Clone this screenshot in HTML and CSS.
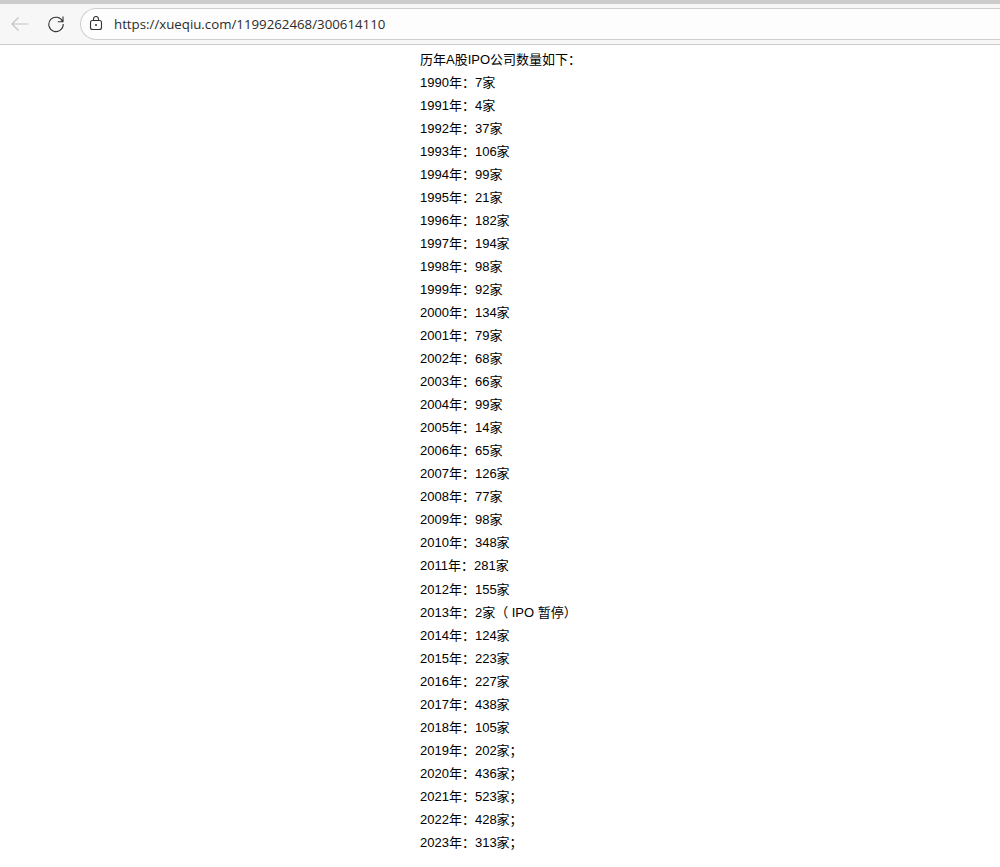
FILE: index.html
```html
<!DOCTYPE html>
<html lang="zh-CN">
<head>
<meta charset="utf-8">
<title>xueqiu</title>
<link rel="stylesheet" href="styles.css">
</head>
<body>
<header class="chrome">
  <div class="tabstrip"></div>
  <div class="toolbar">
    <svg class="icon back" width="20" height="16" viewBox="0 0 20 16"><path d="M18.500 8H2M8.500 1.500 2 8l6.500 6.500" fill="none" stroke="#c4c4c4" stroke-width="1.200"/></svg>
    <svg class="icon reload" width="18" height="18" viewBox="0 0 18 18"><path d="M15.600 6.500A7.200 7.200 0 1 0 16.200 9M16 1.500v5.200h-5.200" fill="none" stroke="#333" stroke-width="1.100"/></svg>
    <div class="omnibox">
      <svg class="lock" width="14" height="16" viewBox="0 0 14 16"><rect x="1.500" y="4.500" width="11" height="9" rx="2" fill="none" stroke="#333" stroke-width="1.100"/><path d="M4.500 4.500V3a2.500 2.500 0 0 1 5 0v1.500" fill="none" stroke="#333" stroke-width="1.100"/><circle cx="7" cy="9" r="1" fill="#333"/></svg>
      <span class="url">https://xueqiu.com/1199262468/300614110</span>
    </div>
  </div>
</header>
<main class="article">
  <p>历年A股IPO公司数量如下：</p>
  <p>1990年：7家</p>
  <p>1991年：4家</p>
  <p>1992年：37家</p>
  <p>1993年：106家</p>
  <p>1994年：99家</p>
  <p>1995年：21家</p>
  <p>1996年：182家</p>
  <p>1997年：194家</p>
  <p>1998年：98家</p>
  <p>1999年：92家</p>
  <p>2000年：134家</p>
  <p>2001年：79家</p>
  <p>2002年：68家</p>
  <p>2003年：66家</p>
  <p>2004年：99家</p>
  <p>2005年：14家</p>
  <p>2006年：65家</p>
  <p>2007年：126家</p>
  <p>2008年：77家</p>
  <p>2009年：98家</p>
  <p>2010年：348家</p>
  <p>2011年：281家</p>
  <p>2012年：155家</p>
  <p>2013年：2家（ IPO 暂停）</p>
  <p>2014年：124家</p>
  <p>2015年：223家</p>
  <p>2016年：227家</p>
  <p>2017年：438家</p>
  <p>2018年：105家</p>
  <p>2019年：202家；</p>
  <p>2020年：436家；</p>
  <p>2021年：523家；</p>
  <p>2022年：428家；</p>
  <p>2023年：313家；</p>
</main>
</body>
</html>
```
FILE: styles.css
```css
* { box-sizing: border-box; }
html, body { margin: 0; padding: 0; background: #fff; height: 867px; overflow: hidden; }
body { font-family: "Liberation Sans", "Noto Sans CJK SC", sans-serif; color: #000; }
.chrome { height: 45px; }
.tabstrip { height: 4px; background: #cccccc; }
.toolbar {
  height: 41px;
  background: #f7f7f7;
  border-bottom: 1px solid #cccccc;
  display: flex;
  align-items: center;
  padding-left: 10px;
}
.icon { flex: none; }
.back { margin-right: 17px; }
.reload { margin-right: 15px; }
.omnibox {
  flex: 1;
  height: 32px;
  background: #fdfdfd;
  border: 1px solid #cfcfcf;
  border-right: 0;
  border-radius: 16px 0 0 16px;
  display: flex;
  align-items: center;
  padding-left: 8px;
}
.lock { margin-right: 11px; }
.url { font: 13.270px "Open Sans", sans-serif; color: #2b2b2b; }
.article { padding: 2.790px 0 0 420px; }
.article p { margin: 0; font-size: 13px; line-height: 23.030px; white-space: nowrap; }
```
